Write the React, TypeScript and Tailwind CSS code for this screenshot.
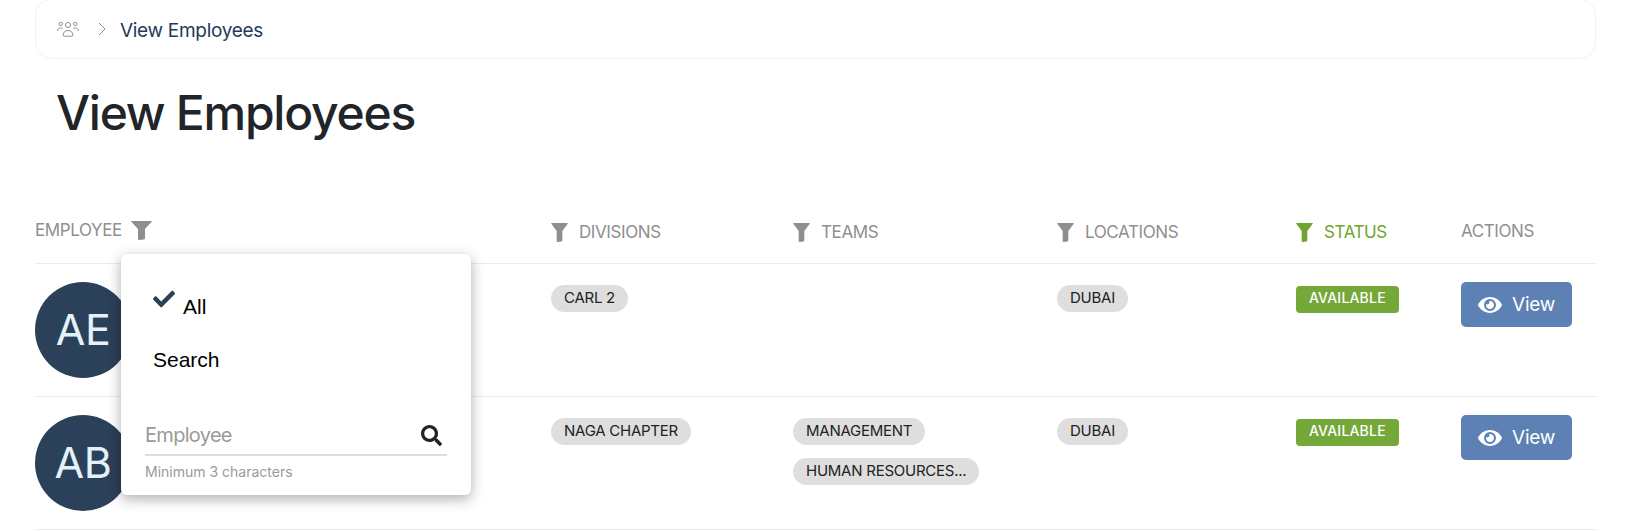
import React from "react";
import { FaEye, FaSearch, FaCheck } from "react-icons/fa";

function Funnel({ className }: { className: string }) {
  return (
    <svg viewBox="0 0 18 19" className={className} fill="currentColor" preserveAspectRatio="none">
      <path d="M0.6 0H17.4Q18 0 17.7 0.7L12 8V17.2Q12 18.2 11 18.5L7.2 18.9Q6 19 6 18V8L0.3 0.7Q0 0 0.6 0Z" />
    </svg>
  );
}

function Users() {
  return (
    <svg viewBox="0 0 22 16" className="w-[22px] h-4 text-[#8f8f8f]" fill="none" stroke="currentColor" strokeWidth="1">
      <circle cx="11" cy="4" r="2.6" />
      <circle cx="3.7" cy="3" r="1.7" />
      <circle cx="18.3" cy="3" r="1.7" />
      <path d="M6.2 14.2c0-3 2-4.7 4.8-4.7s4.8 1.7 4.8 4.7c0 .6-.4 1-1 1H7.2c-.6 0-1-.4-1-1Z" />
      <path d="M.6 10c0-1.9 1.3-3 3.2-3 .8 0 1.4.2 1.9.5" />
      <path d="M21.4 10c0-1.9-1.3-3-3.2-3-.8 0-1.4.2-1.9.5" />
    </svg>
  );
}

function Chip({ children }: { children: React.ReactNode }) {
  return (
    <span className="inline-flex items-center h-[27px] px-[13px] pb-[2px] rounded-full bg-[#dedede] text-[#222222] text-[15px] tracking-[-0.25px] leading-none whitespace-nowrap w-fit">
      {children}
    </span>
  );
}

function Status() {
  return (
    <span className="inline-flex items-center h-[27px] px-[13px] pb-[2px] rounded-[4px] bg-[#74a838] text-white text-[14px] tracking-[0.2px] font-medium leading-none w-fit">
      AVAILABLE
    </span>
  );
}

function ViewButton() {
  return (
    <button className="flex items-center h-[45px] w-[111px] pl-[17px] gap-[10px] rounded-[5px] bg-[#5d81b5] text-white text-[19px] tracking-[-0.2px]">
      <FaEye className="w-6 h-6" />
      <span className="mt-[2px]">View</span>
    </button>
  );
}

function Row({
  initials,
  divisions,
  teams,
}: {
  initials: string;
  divisions: string[];
  teams: string[];
}) {
  return (
    <div className="grid grid-cols-[516px_242px_264px_239px_165px_1fr] h-[133px] pt-[18px] border-b border-[#e3eff7]">
      <div>
        <div className="w-24 h-24 pb-[2px] rounded-full bg-[#2b4059] text-[#e3f2fa] text-[43px] tracking-[-0.5px] flex items-center justify-center">
          {initials}
        </div>
      </div>
      <div className="pt-[3px] flex flex-col gap-[13px]">
        {divisions.map((d) => (
          <Chip key={d}>{d}</Chip>
        ))}
      </div>
      <div className="pt-[3px] flex flex-col gap-[13px]">
        {teams.map((d) => (
          <Chip key={d}>{d}</Chip>
        ))}
      </div>
      <div className="pt-[3px]">
        <Chip>DUBAI</Chip>
      </div>
      <div className="pt-[3px]">
        <Status />
      </div>
      <div>
        <ViewButton />
      </div>
    </div>
  );
}

function HeadCell({ label, green }: { label: string; green?: boolean }) {
  return (
    <div className={`flex items-center gap-[11px] text-[17px] tracking-[-0.4px] ${green ? "text-[#6ea52f]" : "text-[#8f8f8f]"}`}>
      <Funnel className="w-[17px] h-[19px]" />
      <span>{label}</span>
    </div>
  );
}

export default function App() {
  return (
    <div className="relative w-[1632px] h-[532px] overflow-hidden bg-white pl-[35px] pr-[36px] font-['Inter',sans-serif]">
      <div className="-mt-px h-[60px] rounded-[16px] border border-[#f2f3f4] flex items-center pl-[21px]">
        <Users />
        <svg viewBox="0 0 8 14" className="w-2 h-[14px] ml-[19px] text-[#8a8a8a]" fill="none" stroke="currentColor" strokeWidth="1">
          <path d="M1 1l6 6-6 6" />
        </svg>
        <span className="ml-[14px] mt-[4px] text-[19px] tracking-[-0.3px] text-[#1f3a5a]">View Employees</span>
      </div>

      <h1 className="pl-[21px] mt-[22px] text-[48px] tracking-[-1.25px] leading-[64px] font-medium text-[#212529]">View Employees</h1>

      <div className="mt-[73px]">
        <div className="grid grid-cols-[516px_242px_264px_239px_165px_1fr] h-[46px] items-start border-b border-[#e3eff7]">
          <div className="flex items-center gap-[9px] text-[17px] tracking-[-0.4px] text-[#8f8f8f]">
            <span>EMPLOYEE</span>
            <Funnel className="w-[21px] h-[19px]" />
          </div>
          <div className="pt-[2px]"><HeadCell label="DIVISIONS" /></div>
          <div className="pt-[2px]"><HeadCell label="TEAMS" /></div>
          <div className="pt-[2px]"><HeadCell label="LOCATIONS" /></div>
          <div className="pt-[2px]"><HeadCell label="STATUS" green /></div>
          <div className="pt-[3px] text-[17px] tracking-[-0.4px] text-[#8f8f8f] h-[24px] flex items-center">ACTIONS</div>
        </div>
        <Row initials="AE" divisions={["CARL 2"]} teams={[]} />
        <Row initials="AB" divisions={["NAGA CHAPTER"]} teams={["MANAGEMENT", "HUMAN RESOURCES..."]} />
      </div>

      <div className="absolute left-[121px] top-[254px] w-[350px] h-[241px] bg-white rounded-[6px] shadow-[0_4px_14px_rgba(0,0,0,0.32)] pl-[32px] pr-[24px] pt-[36px] font-['Liberation_Sans',sans-serif]">
        <div className="flex h-[30px] text-[21px] text-black leading-[30px]">
          <FaCheck className="w-[22px] h-[22px] text-[#2b4059] -mt-[2px]" />
          <span className="ml-2 mt-[2px]">All</span>
        </div>
        <div className="mt-[25px] text-[21px] leading-[30px] text-black">Search</div>
        <div className="-ml-2 mt-[45px] flex items-center justify-between h-[36px] pb-[4px] border-b-2 border-[#dcdcdc] font-['Inter',sans-serif]">
          <span className="text-[20px] tracking-[-0.7px] text-[#9a9a9a]">Employee</span>
          <FaSearch className="w-[21px] h-[21px] mr-[5px] text-[#212529]" />
        </div>
        <div className="-ml-2 mt-[6px] text-[14px] leading-[20px] text-[#9a9a9a] font-['Inter',sans-serif]">Minimum 3 characters</div>
      </div>
    </div>
  );
}
